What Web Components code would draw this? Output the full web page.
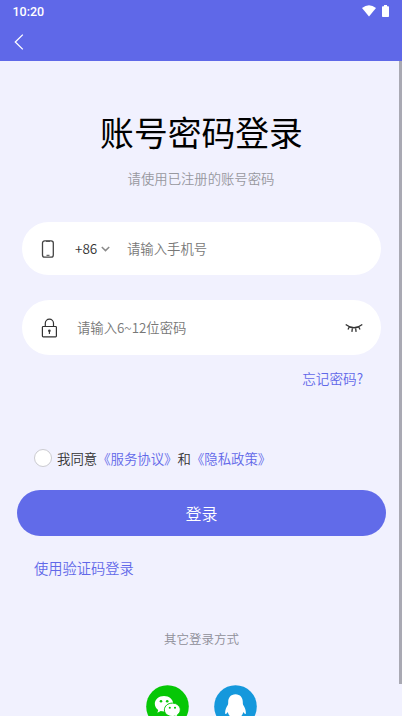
<!DOCTYPE html>
<html lang="zh-CN">
<head>
<meta charset="utf-8">
<title>账号密码登录</title>
<style>
html,body{margin:0;height:100%;overflow:hidden}
body{font-family:"Noto Sans CJK SC",sans-serif;font-weight:350;background:#f1f1fe}
</style>
</head>
<body>
<login-page></login-page>
<script>
function define(name, html) {
  const template = document.createElement('template');
  template.innerHTML = html;
  customElements.define(name, class extends HTMLElement {
    constructor() {
      super();
      this.attachShadow({ mode: 'open' }).append(template.content.cloneNode(true));
    }
  });
}

define('status-bar', `
<style>
:host{display:flex;align-items:center;height:22px;padding:0 13px 0 12.5px;color:#fff;font:500 12.5px/22px Roboto,sans-serif}
.time{flex:1;padding-top:1px}
svg{display:block}
.wifi{margin-right:6px}
</style>
<span class="time">10:20</span>
<svg class="wifi" width="14" height="12" viewBox="0 0 14 12"><path d="M0 3Q7-2.5 14 3L7 11.5Z" fill="#fff"/></svg>
<svg width="7" height="12" viewBox="0 0 7 12"><path d="M2 0h3v1.3h1.2q.8 0 .8.8v9.1q0 .8-.8.8H.8q-.8 0-.8-.8V2.1q0-.8.8-.8H2Z" fill="#fff"/></svg>
`);

define('nav-bar', `
<style>
:host{display:flex;align-items:center;height:39px;padding-left:14px}
svg{display:block}
</style>
<svg width="11" height="16" viewBox="0 0 11 16"><path d="M8.8.6 1.3 8l7.5 7.4" fill="none" stroke="#fff" stroke-width="1.3"/></svg>
`);

define('input-field', `
<style>
:host{display:flex;align-items:center;box-sizing:border-box;margin:0 21px 0 22px;padding:0 18px 0 19px;background:#fff;border-radius:28px;color:#777;font-size:13.35px;line-height:20px;white-space:nowrap}
::slotted(svg){display:block;flex:none}
.text{flex:1}
</style>
<slot name="icon"></slot><slot name="prefix"></slot><span class="text"><slot></slot></span><slot name="action"></slot>
`);

define('country-code', `
<style>
:host{display:flex;align-items:center;width:52px;margin-left:20px;color:#333;font-size:13.5px}
span{padding-bottom:1px}
svg{margin-left:4px}
</style>
<span>+86</span>
<svg width="9" height="6" viewBox="0 0 9 6"><path d="m.8 1 3.7 3.6L8.2 1" fill="none" stroke="#8a8a8a" stroke-width="1.5"/></svg>
`);

define('agree-row', `
<style>
:host{display:flex;align-items:center;height:20px;padding-left:34px;color:#333;font-size:13.4px;line-height:20px;white-space:nowrap}
.box{box-sizing:border-box;width:18px;height:18px;margin-right:5px;border:1px solid #cbcbd0;border-radius:50%;background:#fff}
.label{padding-bottom:1px}
a{color:#6168e9}
</style>
<span class="box"></span><span class="label">我同意<a>《服务协议》</a>和<a>《隐私政策》</a></span>
`);

define('primary-button', `
<style>
:host{display:flex;align-items:center;justify-content:center;height:46.5px;margin:0 16px 0 17px;border-radius:23.25px;background:#616be9;color:#fff;font-size:16px}
</style>
<slot></slot>
`);

define('social-logins', `
<style>
:host{display:flex;gap:25px;padding-left:146px}
svg{display:block;flex:none}
</style>
<svg width="43" height="43" viewBox="0 0 43 43">
<circle cx="21.5" cy="21.5" r="21.3" fill="#06c706"/>
<path d="M18 11c-5.2 0-9.2 3.4-9.2 7.8 0 2.5 1.3 4.7 3.4 6.1l-.8 2.9 3.3-1.8c1 .3 2.1.5 3.3.5 5.2 0 9.2-3.4 9.2-7.7S23.2 11 18 11Z" fill="#fff"/>
<path d="M26.4 18.1c-4.6 0-8 3-8 6.7s3.4 6.7 8 6.7c.9 0 1.8-.1 2.6-.4l2.9 1.6-.7-2.6c1.9-1.2 3.1-3.1 3.1-5.3 0-3.7-3.4-6.7-7.9-6.7Z" fill="#fff" stroke="#06c706" stroke-width="1"/>
<g fill="#06c706"><circle cx="15" cy="16.2" r="1.3"/><circle cx="21.2" cy="16.2" r="1.3"/><circle cx="23.8" cy="22.7" r="1.05"/><circle cx="29" cy="22.7" r="1.05"/></g>
</svg>
<svg width="43" height="43" viewBox="0 0 43 43">
<circle cx="21.5" cy="21.5" r="21.3" fill="#1598dc"/>
<path d="M21.5 9.2c-4.8 0-7.3 3.6-7.3 7.7 0 1 0 1.900-.3 2.800-2 3-3 6.100-2.700 8.700.2 1.300 1.500.5 2.500-1.300.5 2 1.500 3.400 2.600 4.500-2 .8-2 3 1.200 3 2 0 3.300-.6 4-1.200.8.600 2.100 1.200 4.100 1.200 3.200 0 3.200-2.200 1.200-3 1.100-1.100 2.100-2.500 2.600-4.500 1 1.800 2.200 2.600 2.400 1.300.3-2.600-.7-5.700-2.700-8.700-.3-.9-.3-1.800-.3-2.800 0-4.100-2.500-7.700-7.300-7.700Z" fill="#fff"/>
</svg>
`);

define('login-page', `
<style>
:host{display:block;position:relative;width:402px;height:716px;overflow:hidden;background:#f1f1fe}
header{height:61px;background:#5f68e8}
h1{margin:51px 0 0;padding-left:1px;text-align:center;font-weight:400;font-size:33.8px;line-height:40px;color:#000}
.sub{margin-top:16.5px;text-align:center;font-size:13.35px;line-height:20px;color:#98989f}
.phone{height:53px;margin-top:33.5px}
.password{height:55px;margin-top:25px}
.forgot{margin:12.5px 39px 0 0;text-align:right;font-size:13.6px;line-height:20px;color:#6168e9}
agree-row{margin-top:60.5px}
primary-button{margin-top:21.5px}
.sms{margin:21.5px 0 0 34px;font-size:14.25px;line-height:20px;color:#6168e9}
.other{margin-top:51px;padding-left:1px;text-align:center;font-size:12.5px;line-height:20px;color:#8e8e98}
social-logins{margin-top:36.5px}
.lock{margin-right:20px}
.scroll{position:absolute;right:0;top:61px;width:3px;height:623px;background:#a9a9b3}
</style>
<header><status-bar></status-bar><nav-bar></nav-bar></header>
<h1>账号密码登录</h1>
<div class="sub">请使用已注册的账号密码</div>
<input-field class="phone">
<svg slot="icon" width="14" height="18" viewBox="0 0 14 18"><rect x="1.5" y=".8" width="10.8" height="16.3" rx="2.2" fill="none" stroke="#444" stroke-width="1.3"/><path d="M5 1.300h4M5.500 15.300h3" stroke="#444" stroke-width="1"/></svg>
<country-code slot="prefix"></country-code>请输入手机号</input-field>
<input-field class="password">
<svg slot="icon" class="lock" width="16" height="20" viewBox="0 0 16 20"><rect x="1.400" y="8.500" width="14" height="10.300" rx=".8" fill="none" stroke="#333" stroke-width="1.200"/><path d="M4.300 8.500V5.200a4.100 4.100 0 0 1 8.200 0v3.300" fill="none" stroke="#333" stroke-width="1.200"/><path d="M8.400 13v3" stroke="#333" stroke-width="1.100"/><circle cx="8.400" cy="12.700" r="1.300" fill="#333"/></svg>请输入6~12位密码<svg slot="action" width="18" height="10" viewBox="0 0 18 10"><path d="M.7 1.500Q9 8 17.300 1.500M4.200 4 3 6.600M7.400 4.900 6.900 8.800M10.600 4.900l.5 3.900M13.800 4 15 6.600" fill="none" stroke="#333" stroke-width="1.300"/></svg></input-field>
<div class="forgot">忘记密码?</div>
<agree-row></agree-row>
<primary-button>登录</primary-button>
<div class="sms">使用验证码登录</div>
<div class="other">其它登录方式</div>
<social-logins></social-logins>
<div class="scroll"></div>
`);
</script>
</body>
</html>
